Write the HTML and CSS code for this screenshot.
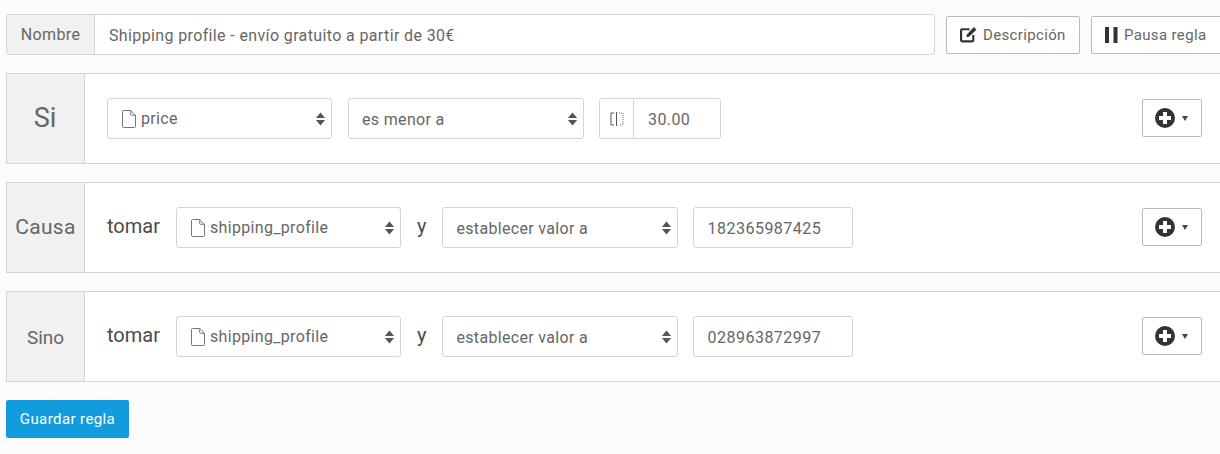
FILE: index.html
```html
<!DOCTYPE html>
<html lang="es">
<head>
<meta charset="utf-8">
<title>Regla</title>
<link rel="stylesheet" href="styles.css">
</head>
<body>
<svg class="defs" width="0" height="0" aria-hidden="true">
  <symbol id="file" viewBox="0 0 16 18">
    <path d="M1.500 1.500a1 1 0 0 1 1-1h7.200l4.800 4.800v11.200a1 1 0 0 1-1 1h-11a1 1 0 0 1-1-1z M9.700.5v3.800a1 1 0 0 0 1 1h3.800" fill="none" stroke="#777" stroke-width="1"/>
  </symbol>
  <symbol id="updown" viewBox="0 0 10 14">
    <path d="M5 0.500 9.600 6H.4z M5 13.500 .4 8h9.200z" fill="#555"/>
  </symbol>
  <symbol id="plus" viewBox="0 0 20 20">
    <circle cx="10" cy="10" r="10" fill="#333"/>
    <path d="M8 4h4v4h4v4h-4v4H8v-4H4V8h4z" fill="#fff"/>
  </symbol>
</svg>
<main class="page">
  <div class="top">
    <div class="name-group">
      <span class="name-label">Nombre</span>
      <span class="name-value">Shipping profile - envío gratuito a partir de 30€</span>
    </div>
    <button class="btn btn-desc" type="button">
      <svg class="ic-edit" viewBox="0 0 16 16"><path d="M12.500 8.500v5a1 1 0 0 1-1 1H2a1 1 0 0 1-1-1V4a1 1 0 0 1 1-1h7" fill="none" stroke="#333" stroke-width="2"/><path d="M6 10.500 6.500 8 13 1 15.500 3.500 8.500 10z" fill="#333"/></svg>
      Descripción
    </button>
    <button class="btn btn-pause" type="button">
      <svg class="ic-pause" viewBox="0 0 13 16"><path d="M0 0h4v16H0zM8.500 0h4v16H8.500z" fill="#333"/></svg>
      Pausa regla
    </button>
  </div>

  <section class="rule">
    <div class="side side-lg">Si</div>
    <div class="body">
      <div class="field sel w225"><svg class="ic-file"><use href="#file"/></svg><span class="grow">price</span><svg class="ic-ud"><use href="#updown"/></svg></div>
      <div class="field sel w236 plain"><span class="grow">es menor a</span><svg class="ic-ud"><use href="#updown"/></svg></div>
      <div class="field group">
        <span class="addon"><svg class="ic-col" viewBox="0 0 14 14"><path d="M4 1H1v12h3" fill="none" stroke="#555" stroke-width="1"/><path d="M6.500 0v14" stroke="#555" stroke-width="1"/><path d="M9 1h4v12H9" fill="none" stroke="#777" stroke-width="1" stroke-dasharray="1 1"/></svg></span>
        <span class="group-value">30.00</span>
      </div>
      <button class="add" type="button"><svg class="ic-plus"><use href="#plus"/></svg><i class="caret"></i></button>
    </div>
  </section>

  <section class="rule">
    <div class="side side-md">Causa</div>
    <div class="body">
      <span class="word">tomar</span>
      <div class="field sel w225"><svg class="ic-file"><use href="#file"/></svg><span class="grow">shipping_profile</span><svg class="ic-ud"><use href="#updown"/></svg></div>
      <span class="word word-y">y</span>
      <div class="field sel w236 plain"><span class="grow">establecer valor a</span><svg class="ic-ud"><use href="#updown"/></svg></div>
      <div class="field text">182365987425</div>
      <button class="add" type="button"><svg class="ic-plus"><use href="#plus"/></svg><i class="caret"></i></button>
    </div>
  </section>

  <section class="rule">
    <div class="side side-sm">Sino</div>
    <div class="body">
      <span class="word">tomar</span>
      <div class="field sel w225"><svg class="ic-file"><use href="#file"/></svg><span class="grow">shipping_profile</span><svg class="ic-ud"><use href="#updown"/></svg></div>
      <span class="word word-y">y</span>
      <div class="field sel w236 plain"><span class="grow">establecer valor a</span><svg class="ic-ud"><use href="#updown"/></svg></div>
      <div class="field text">028963872997</div>
      <button class="add" type="button"><svg class="ic-plus"><use href="#plus"/></svg><i class="caret"></i></button>
    </div>
  </section>

  <button class="save" type="button">Guardar regla</button>
</main>
</body>
</html>
```
FILE: styles.css
```css
* { box-sizing: border-box; }
html, body { margin: 0; height: 100%; }
body {
  background: #fcfcfc;
  font-family: Roboto, "Liberation Sans", sans-serif;
  color: #666;
  overflow: hidden;
}
.defs { position: absolute; }
.page { width: 1240px; padding: 14px 0 0 6px; }
.top { display: flex; align-items: center; height: 41px; width: 1234px; }
.name-group {
  display: flex; width: 929px; height: 41px;
  background: #fff; border: 1px solid #d4d4d4; border-radius: 3px;
  font-size: 16px; line-height: 40px;
}
.name-label { width: 88px; flex: none; background: #f1f1f1; border-right: 1px solid #d4d4d4; text-align: center; letter-spacing: .4px; border-radius: 3px 0 0 3px; }
.name-value { padding: 1px 0 0 14px; letter-spacing: .37px; }
.btn {
  display: flex; align-items: center; height: 38px; padding: 0;
  background: #fff; border: 1px solid #b9b9c0; border-radius: 2px;
  font: 15px Roboto, sans-serif; color: #666; flex: none; letter-spacing: .35px;
}
.btn-desc { width: 134px; margin-left: 11px; padding-left: 13px; gap: 6px; }
.btn-pause { width: 140px; margin-left: 11px; padding-left: 13px; gap: 6px; }
.ic-edit { width: 17px; height: 17px; margin-bottom: 1px; }
.ic-pause { width: 13px; height: 16px; }
.rule {
  display: flex; width: 1214px; height: 91px; margin-top: 18px;
  background: #fff; border: solid #d4d4d4; border-width: 1px 0;
}
.side {
  width: 79px; flex: none; display: flex; align-items: center; justify-content: center;
  background: #f1f1f1; border: solid #d4d4d4; border-width: 0 1px;
}
.side-lg { font-size: 27px; padding: 0 1px 2px 0; }
.side-md { font-size: 21px; letter-spacing: .3px; padding-bottom: 2px; }
.side-sm { font-size: 19px; padding-top: 1px; }
.body { flex: 1; display: flex; align-items: center; padding: 0 18px 0 22px; }
.field {
  height: 41px; background: #fff; border: 1px solid #d4d4d4; border-radius: 3px;
  font-size: 16px; display: flex; align-items: center; flex: none;
}
.sel { padding: 0 5px 0 13px; letter-spacing: .33px; }
.grow { flex: 1; padding-bottom: 1px; }
.w225 { width: 225px; }
.w236 { width: 236px; margin-left: 16px; }
.plain { padding-left: 13px; }
.plain .grow { padding: 1px 0 0; }
.word { font-size: 20px; color: #4a4a4a; margin-right: 16px; padding-bottom: 3px; flex: none; }
.word-y { margin: 0 0 0 16px; }
.ic-file { width: 16px; height: 18px; margin-right: 4px; flex: none; }
.ic-ud { width: 11px; height: 14px; flex: none; }
.group { width: 122px; margin-left: 15px; }
.addon { width: 34px; height: 39px; border-right: 1px solid #d4d4d4; display: flex; align-items: center; justify-content: center; flex: none; }
.ic-col { width: 14px; height: 14px; }
.group-value { padding-left: 14px; letter-spacing: .4px; padding-top: 1px; }
.text { width: 160px; margin-left: 15px; padding: 1px 0 0 13px; letter-spacing: .5px; }
.add {
  margin: 0 0 1px auto; width: 60px; height: 38px; flex: none; padding: 0 2px 0 0;
  display: flex; align-items: center; justify-content: center; gap: 7px;
  background: #fff; border: 1px solid #b9b9c0; border-radius: 2px;
}
.ic-plus { width: 20px; height: 20px; }
.caret { width: 0; height: 0; border: 3.500px solid transparent; border-top: 5.500px solid #444; border-bottom: 0; }
.save {
  display: block; width: 123px; height: 38px; margin-top: 18px; padding: 0;
  background: #129cdd; border: 0; border-radius: 2px; color: #fff;
  font: 400 15px Roboto, sans-serif; letter-spacing: .4px;
}
```
